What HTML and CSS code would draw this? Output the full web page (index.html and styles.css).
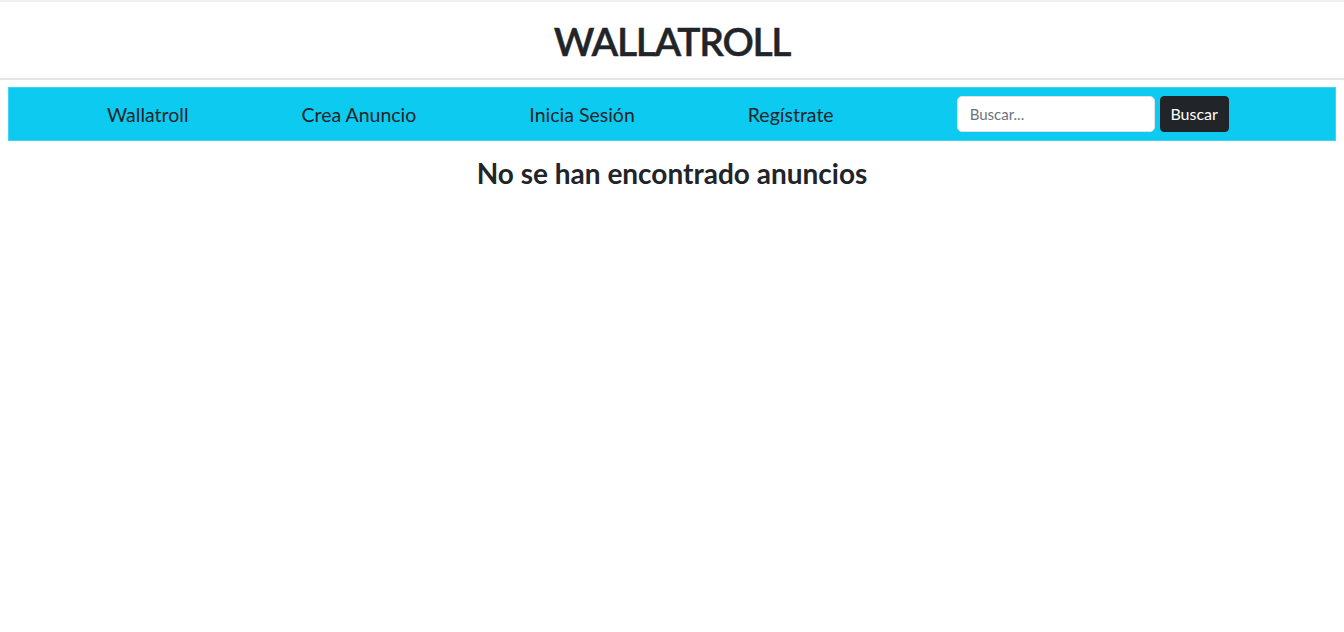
FILE: index.html
```html
<!DOCTYPE html>
<html lang="es">
<head>
<meta charset="utf-8">
<title>Wallatroll</title>
<link rel="stylesheet" href="styles.css">
</head>
<body>
<header class="site-header">
  <h1 class="site-title">WALLATROLL</h1>
</header>
<nav class="main-nav">
  <a class="nav-link" href="#">Wallatroll</a>
  <a class="nav-link" href="#">Crea Anuncio</a>
  <a class="nav-link" href="#">Inicia Sesión</a>
  <a class="nav-link" href="#">Regístrate</a>
  <form class="search-form">
    <input class="search-input" type="text" placeholder="Buscar...">
    <button class="search-btn" type="button">Buscar</button>
  </form>
</nav>
<main class="content">
  <h3 class="empty-msg">No se han encontrado anuncios</h3>
</main>
</body>
</html>
```
FILE: styles.css
```css
* { box-sizing: border-box; }
html, body {
  margin: 0;
  padding: 0;
  background: #fff;
  color: #212529;
  font-family: "Lato", "Open Sans", "Liberation Sans", sans-serif;
}
.site-header {
  border-top: 2px solid #efefef;
  border-bottom: 2px solid #e6e6e6;
  height: 80px;
  display: flex;
  align-items: center;
  justify-content: center;
}
.site-title {
  margin: 2px 0 0;
  font-size: 39px;
  font-weight: 600;
  letter-spacing: -1.3px;
  line-height: 1.2;
  -webkit-text-stroke: 0.4px #212529;
}
.main-nav {
  margin: 7px 8px 0;
  height: 54px;
  background: #0dcaf0;
  border: 1px solid #3dd5f3;
  display: flex;
  align-items: center;
  gap: 113px;
  padding: 0 0 0 98px;
}
.nav-link {
  color: #212529;
  text-decoration: none;
  font-size: 19.5px;
}
.search-form {
  display: flex;
  gap: 5px;
  margin-left: 10px;
}
.search-input {
  width: 198px;
  height: 36px;
  border: 1px solid #dee2e6;
  border-radius: 5px;
  padding: 6px 12px;
  font-family: inherit;
  font-size: 15px;
  color: #212529;
  background: #fff;
}
.search-input::placeholder { color: #6c757d; }
.search-btn {
  height: 36px;
  width: 69px;
  border: 1px solid #212529;
  border-radius: 4px;
  background: #212529;
  color: #fff;
  font-family: inherit;
  font-size: 16px;
  padding: 0 0 2px;
}
.content {
  padding-top: 16px;
  text-align: center;
}
.empty-msg {
  margin: 0;
  font-size: 28px;
  font-weight: 700;
  line-height: 1.2;
}
```
